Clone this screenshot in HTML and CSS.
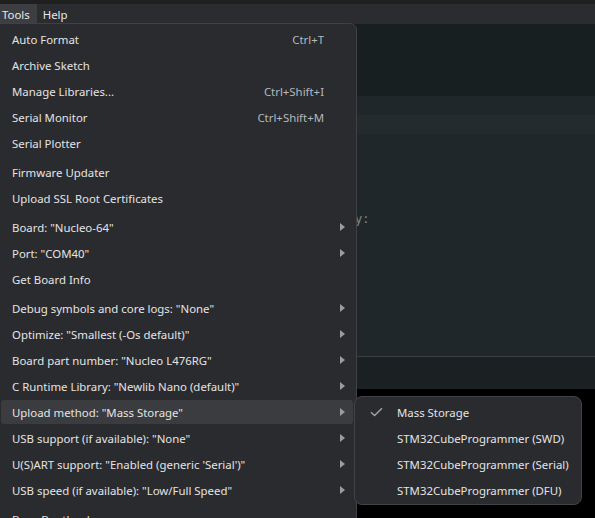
FILE: index.html
```html
<!DOCTYPE html>
<html>
<head>
<meta charset="utf-8">
<link rel="stylesheet" href="styles.css">
</head>
<body>
<div class="app">
  <div class="titlestrip"></div>
  <div class="menubar">
    <span class="mb-item active">Tools</span>
    <span class="mb-item">Help</span>
  </div>
  <div class="toolbar"></div>
  <div class="editor">
    <div class="line"></div>
    <div class="line current"></div>
    <div class="line"></div>
    <div class="line"></div>
    <div class="line"></div>
    <div class="line"></div>
    <div class="line comment">y:</div>
  </div>
  <div class="panel"></div>
  <div class="console"></div>

  <div class="menu">
    <div class="group">
      <div class="item"><span>Auto Format</span><span class="sc">Ctrl+T</span></div>
      <div class="item"><span>Archive Sketch</span></div>
      <div class="item"><span>Manage Libraries...</span><span class="sc">Ctrl+Shift+I</span></div>
      <div class="item"><span>Serial Monitor</span><span class="sc">Ctrl+Shift+M</span></div>
      <div class="item"><span>Serial Plotter</span></div>
    </div>
    <div class="group">
      <div class="item"><span>Firmware Updater</span></div>
      <div class="item"><span>Upload SSL Root Certificates</span></div>
    </div>
    <div class="group">
      <div class="item sub"><span>Board: "Nucleo-64"</span></div>
      <div class="item sub"><span>Port: "COM40"</span></div>
      <div class="item"><span>Get Board Info</span></div>
    </div>
    <div class="group">
      <div class="item sub"><span>Debug symbols and core logs: "None"</span></div>
      <div class="item sub"><span>Optimize: "Smallest (-Os default)"</span></div>
      <div class="item sub"><span>Board part number: "Nucleo L476RG"</span></div>
      <div class="item sub"><span>C Runtime Library: "Newlib Nano (default)"</span></div>
      <div class="item sub hover"><span>Upload method: "Mass Storage"</span></div>
      <div class="item sub"><span>USB support (if available): "None"</span></div>
      <div class="item sub"><span>U(S)ART support: "Enabled (generic 'Serial')"</span></div>
      <div class="item sub"><span>USB speed (if available): "Low/Full Speed"</span></div>
    </div>
    <div class="group">
      <div class="item"><span>Burn Bootloader</span></div>
    </div>
  </div>

  <div class="submenu">
    <div class="sitem"><span class="check"><svg width="13" height="10" viewBox="0 0 13 10"><path d="M1 5.2 L4.6 8.6 L12 1.2" fill="none" stroke="#a3a3a3" stroke-width="1.4"/></svg></span><span>Mass Storage</span></div>
    <div class="sitem"><span class="check"></span><span>STM32CubeProgrammer (SWD)</span></div>
    <div class="sitem"><span class="check"></span><span>STM32CubeProgrammer (Serial)</span></div>
    <div class="sitem"><span class="check"></span><span>STM32CubeProgrammer (DFU)</span></div>
  </div>
</div>
</body>
</html>
```

FILE: styles.css
```css
html, body {
  margin: 0;
  padding: 0;
  background: #000;
  overflow: hidden;
}
body {
  width: 595px;
  height: 518px;
}
.app {
  position: relative;
  width: 595px;
  height: 518px;
  display: flex;
  flex-direction: column;
  font-family: "Noto Sans", "Open Sans", sans-serif;
  font-size: 11.4px;
  color: #e4e4e4;
  overflow: hidden;
}
.titlestrip {
  height: 4px;
  background: #1f1f1f;
}
.menubar {
  height: 20px;
  background: #2b2c30;
  display: flex;
  align-items: stretch;
}
.mb-item {
  display: flex;
  align-items: center;
  padding: 0 5px 0 2px;
  margin-right: 4px;
  color: #e8e8e8;
}
.mb-item.active {
  background: #3d3e42;
  padding: 0 7px 0 2px;
}
.toolbar {
  height: 72px;
  background: #181f21;
}
.editor {
  height: 260px;
  background: #20272a;
  font-family: "DejaVu Sans Mono", monospace;
  font-size: 12px;
  color: #c8c8c8;
}
.line {
  height: 19px;
  line-height: 19px;
  padding-left: 355px;
  white-space: pre;
}
.line.current {
  background: #232b2d;
}
.line.comment {
  color: #7d8a8c;
}
.panel {
  height: 32px;
  background: #1b2123;
  border-top: 1px solid #3a3f42;
}
.console {
  flex: 1;
  background: #000;
}

/* Tools menu */
.menu {
  position: absolute;
  left: -1px;
  top: 23px;
  width: 358px;
  height: 520px;
  background: #2a2b2f;
  border: 1px solid #404145;
  border-radius: 0 7px 0 0;
  padding-top: 2px;
  display: flex;
  flex-direction: column;
  gap: 3px;
  box-sizing: border-box;
}
.group {
  display: flex;
  flex-direction: column;
}
.item {
  height: 24px;
  margin: 1px 3px 1px 1px;
  display: flex;
  align-items: center;
  justify-content: space-between;
  padding: 0 29px 0 11px;
  border-radius: 3px;
  position: relative;
  white-space: nowrap;
}
.item.hover {
  background: #3b3c40;
}
.sc {
  color: #b4b9be;
}
.item.sub::after {
  content: "";
  position: absolute;
  right: 8px;
  top: 8px;
  width: 0;
  height: 0;
  border-top: 4px solid transparent;
  border-bottom: 4px solid transparent;
  border-left: 5px solid #9c9c9c;
}

/* Submenu */
.submenu {
  position: absolute;
  left: 354px;
  top: 396px;
  width: 228px;
  height: 109px;
  box-sizing: border-box;
  background: #2a2b2f;
  border: 1px solid #424347;
  border-radius: 8px;
  padding-top: 2px;
  display: flex;
  flex-direction: column;
}
.sitem {
  height: 26px;
  display: flex;
  align-items: center;
  white-space: nowrap;
}
.check {
  width: 42px;
  display: flex;
  justify-content: flex-end;
  padding-right: 14px;
  box-sizing: border-box;
}
```
